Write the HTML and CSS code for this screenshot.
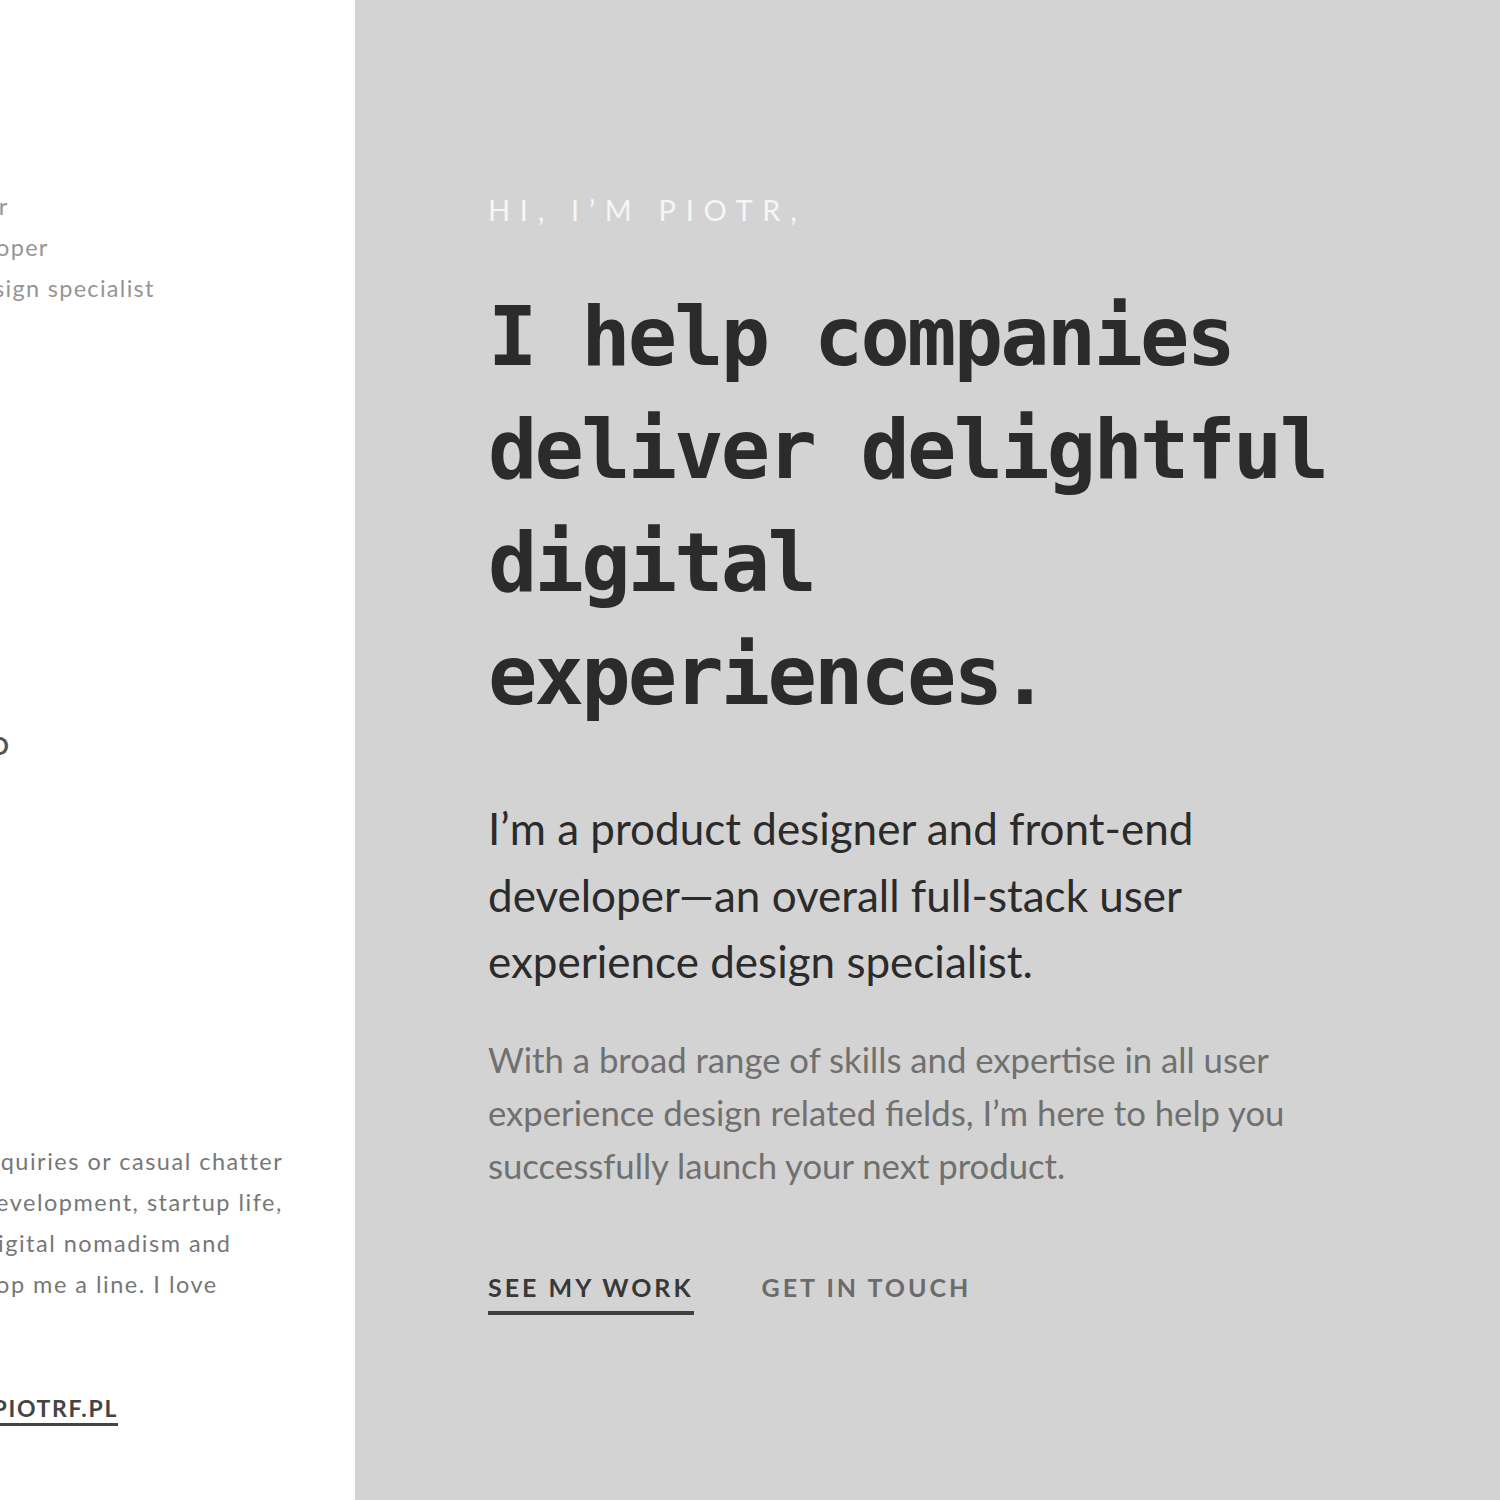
FILE: index.html
```html
<!DOCTYPE html>
<html lang="en">
<head>
<meta charset="utf-8">
<title>Piotr F. — Product designer</title>
<link rel="stylesheet" href="styles.css">
</head>
<body>
<div class="page">
  <aside class="side">
    <div class="side-inner">
      <p class="roles">
        <span class="line">Product designer</span>
        <span class="line">Front-end developer</span>
        <span class="line">Full-stack UI design specialist</span>
      </p>
      <h2 class="side-title">HELLO</h2>
      <p class="side-text">
        <span class="line">For project inquiries or casual chatter</span>
        <span class="line">webdesign, development, startup life,</span>
        <span class="line">film, travel, digital nomadism and</span>
        <span class="line">music, art, drop me a line. I love</span>
      </p>
      <a class="side-link" href="#">HELLO@PIOTRF.PL</a>
    </div>
  </aside>
  <main class="main">
    <p class="hello">HI, I’M PIOTR,</p>
    <h1 class="headline">I help companies deliver delightful digital experiences.</h1>
    <p class="lead">I’m a product designer and front-end developer—an overall full-stack user experience design specialist.</p>
    <p class="body">With a broad range of skills and expertise in all user experience design related fields, I’m here to help you successfully launch your next product.</p>
    <nav class="actions">
      <a class="btn btn-primary" href="#">SEE MY WORK</a>
      <a class="btn btn-secondary" href="#">GET IN TOUCH</a>
    </nav>
  </main>
</div>
</body>
</html>
```

FILE: styles.css
```css
* { box-sizing: border-box; }
html, body { margin: 0; padding: 0; }
body {
  font-family: Lato, "Open Sans", "Liberation Sans", sans-serif;
  background: #d3d3d3;
  width: 1500px;
  height: 1500px;
  overflow: hidden;
}
.page {
  display: flex;
  height: 1500px;
}
.side {
  width: 355px;
  flex: none;
  background: #ffffff;
  overflow: hidden;
}
.side-inner {
  margin-left: -157px;
  width: 560px;
  padding-top: 186px;
}
.line { display: block; white-space: nowrap; }
.roles {
  margin: 0 0 0 -30px;
  font-size: 23.5px;
  letter-spacing: 1.3px;
  line-height: 41px;
  color: #959595;
}
.side-title {
  margin: 422px 0 0 0;
  font-size: 24px;
  font-weight: 700;
  letter-spacing: 2px;
  color: #555;
  line-height: 30px;
  padding-left: 82px;
}
.side-text {
  margin: 380px 0 0 0;
  font-size: 23.5px;
  letter-spacing: 1.5px;
  line-height: 41px;
  color: #777777;
}
.side-link {
  display: inline-block;
  margin: 89px 0 0 47px;
  font-size: 23px;
  font-weight: 700;
  letter-spacing: 1.7px;
  color: #444;
  text-decoration: none;
  border-bottom: 3px solid #444;
  padding-bottom: 1px;
}
.main {
  flex: 1;
  padding: 190px 0 0 133px;
  background: #d3d3d3;
}
.hello {
  margin: 0;
  font-size: 29px;
  font-weight: 400;
  letter-spacing: 9.7px;
  color: #f6f6f6;
  line-height: 40px;
}
.headline {
  margin: 50px 0 0 0;
  width: 900px;
  font-family: "DejaVu Sans Mono", "Liberation Mono", monospace;
  font-size: 82px;
  font-weight: 700;
  letter-spacing: -2.8px;
  line-height: 113px;
  color: #2b2b2b;
}
.lead {
  margin: 63px 0 0 0;
  width: 760px;
  font-size: 44px;
  line-height: 66.5px;
  color: #2b2b2b;
}
.body {
  margin: 38px 0 0 0;
  width: 830px;
  font-size: 34.7px;
  line-height: 53px;
  color: #707070;
}
.actions {
  display: flex;
  gap: 68px;
  margin-top: 80px;
}
.btn {
  font-size: 25px;
  font-weight: 700;
  letter-spacing: 3px;
  text-decoration: none;
  padding-bottom: 9px;
}
.btn-primary {
  color: #383838;
  border-bottom: 4px solid #404040;
}
.btn-secondary {
  color: #6b6b6b;
  border-bottom: 4px solid transparent;
}
```
